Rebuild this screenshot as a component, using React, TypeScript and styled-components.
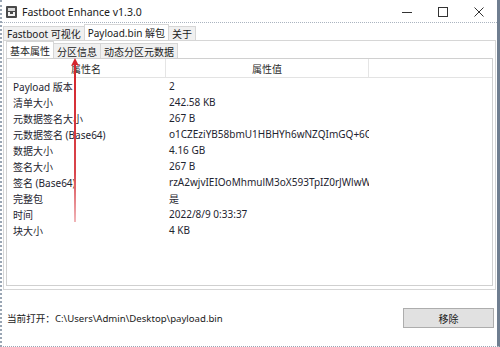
import styled, { createGlobalStyle } from "styled-components"

const GlobalStyle = createGlobalStyle`
    html, body {
        margin: 0;
        padding: 0;
        background: #ffffff;
    }
    body {
        font-family: "Noto Sans", "Noto Sans CJK SC", sans-serif;
        color: #1c1c1c;
    }
`

const rows = [
    { name: "Payload 版本", value: "2" },
    { name: "清单大小", value: "242.58 KB" },
    { name: "元数据签名大小", value: "267 B" },
    { name: "元数据签名 (Base64)", value: "o1CZEziYB58bmU1HBHYh6wNZQImGQ+6CdXr2kP0" },
    { name: "数据大小", value: "4.16 GB" },
    { name: "签名大小", value: "267 B" },
    { name: "签名 (Base64)", value: "rzA2wjvIEIOoMhmulM3oX593TpIZ0rJWlwWq8Hc" },
    { name: "完整包", value: "是" },
    { name: "时间", value: "2022/8/9 0:33:37" },
    { name: "块大小", value: "4 KB" },
]

export default function App() {
    return (
        <>
            <GlobalStyle />
            <Window>
                <TitleBar>
                    <AppIcon width="11" height="12" viewBox="0 0 11 12">
                        <rect x="0" y="0" width="11" height="12" rx="1" fill="#4a4a4a" />
                        <rect x="2" y="2" width="7" height="3" fill="#d8d8d8" />
                        <path d="M2 6 H4 V8 H7 V6 H9 V10 H2 Z" fill="#f2f2f2" />
                    </AppIcon>
                    <Title>Fastboot Enhance v1.3.0</Title>
                    <Controls>
                        <ControlButton>
                            <svg width="10" height="10" viewBox="0 0 10 10">
                                <path d="M0 5.5 H10" stroke="#333" strokeWidth="1" />
                            </svg>
                        </ControlButton>
                        <ControlButton>
                            <svg width="10" height="10" viewBox="0 0 10 10">
                                <rect x="0.5" y="0.5" width="9" height="9" fill="none" stroke="#333" strokeWidth="1" />
                            </svg>
                        </ControlButton>
                        <ControlButton>
                            <svg width="10" height="10" viewBox="0 0 10 10">
                                <path d="M0.5 0.5 L9.5 9.5 M9.5 0.5 L0.5 9.5" stroke="#333" strokeWidth="1" />
                            </svg>
                        </ControlButton>
                    </Controls>
                </TitleBar>

                <TabStrip>
                    <Tab>Fastboot 可视化</Tab>
                    <Tab $active>Payload.bin 解包</Tab>
                    <Tab>关于</Tab>
                </TabStrip>

                <Panel>
                    <InnerTabStrip>
                        <InnerTab $active>基本属性</InnerTab>
                        <InnerTab>分区信息</InnerTab>
                        <InnerTab>动态分区元数据</InnerTab>
                    </InnerTabStrip>

                    <ListView>
                        <HeaderRow>
                            <HeaderCell>属性名</HeaderCell>
                            <HeaderCell>属性值</HeaderCell>
                            <HeaderCell />
                        </HeaderRow>
                        {rows.map(row => (
                            <Row key={row.name}>
                                <NameCell>{row.name}</NameCell>
                                <ValueCell>{row.value}</ValueCell>
                            </Row>
                        ))}
                    </ListView>
                </Panel>

                <Footer>
                    <FilePath>当前打开：C:\Users\Admin\Desktop\payload.bin</FilePath>
                    <RemoveButton>移除</RemoveButton>
                </Footer>

                <Arrow width="12" height="164" viewBox="0 0 12 164">
                    <defs>
                        <linearGradient id="shaft" x1="0" y1="0" x2="0" y2="1">
                            <stop offset="0" stopColor="#d4232b" />
                            <stop offset="0.7" stopColor="#d9454c" />
                            <stop offset="1" stopColor="#f0b5b8" />
                        </linearGradient>
                    </defs>
                    <path d="M6 0 L10 8 L7 7 L7 164 L5 164 L5 7 L2 8 Z" fill="url(#shaft)" />
                </Arrow>
            </Window>
        </>
    )
}

const Window = styled.div`
    position: relative;
    width: 500px;
    height: 347px;
    box-sizing: border-box;
    display: flex;
    flex-direction: column;
    background: #ffffff;
    border-left: 2px dotted #9aa6b4;
    border-right: 3px solid #6f7e90;
    border-bottom: 1px dotted #9aa6b4;
    overflow: hidden;
`

const TitleBar = styled.div`
    height: 22px;
    flex-shrink: 0;
    display: flex;
    align-items: center;
    padding-left: 4px;
    border-bottom: 1px dotted #aab4c0;
`

const AppIcon = styled.svg`
    flex-shrink: 0;
    margin-top: 2px;
`

const Title = styled.span`
    margin-left: 5px;
    margin-top: 2px;
    font-size: 10.5px;
    color: #1a1a1a;
`

const Controls = styled.div`
    margin-left: auto;
    display: flex;
    align-items: center;
    margin-top: 2px;
`

const ControlButton = styled.div`
    width: 36px;
    height: 22px;
    display: flex;
    align-items: center;
    justify-content: center;
`

const TabStrip = styled.div`
    height: 17px;
    flex-shrink: 0;
    display: flex;
    align-items: flex-end;
    padding-left: 1px;
`

const Tab = styled.div<{ $active?: boolean }>`
    height: ${p => (p.$active ? "16px" : "14px")};
    box-sizing: border-box;
    display: flex;
    align-items: center;
    padding: 0 3px;
    font-size: 10px;
    color: #1a1a1a;
    white-space: nowrap;
    background: ${p => (p.$active ? "#ffffff" : "#f0f0f0")};
    border: 1px solid #d6d6d6;
    border-bottom: none;
    margin-right: -1px;
    position: relative;
    z-index: ${p => (p.$active ? 1 : 0)};
`

const Panel = styled.div`
    height: 250px;
    flex-shrink: 0;
    box-sizing: border-box;
    margin: 0 1px 0 1px;
    border: 1px solid #d6d6d6;
    display: flex;
    flex-direction: column;
    padding: 0 2px 3px 2px;
    background: #ffffff;
`

const InnerTabStrip = styled.div`
    height: 17px;
    flex-shrink: 0;
    display: flex;
    align-items: flex-end;
`

const InnerTab = styled.div<{ $active?: boolean }>`
    height: ${p => (p.$active ? "17px" : "15px")};
    box-sizing: border-box;
    display: flex;
    align-items: center;
    padding: 0 3px;
    font-size: 10px;
    color: #1a1a1a;
    white-space: nowrap;
    background: ${p => (p.$active ? "#ffffff" : "#f0f0f0")};
    border: 1px solid #d6d6d6;
    border-bottom: none;
    margin-right: -1px;
`

const ListView = styled.div`
    flex: 1;
    box-sizing: border-box;
    border: 1px solid #d0d0d0;
    background: #ffffff;
    overflow: hidden;
`

const HeaderRow = styled.div`
    display: grid;
    grid-template-columns: 159px 203px 1fr;
    height: 18px;
    border-bottom: 1px solid #e3e3e3;
`

const HeaderCell = styled.div`
    display: flex;
    align-items: center;
    justify-content: center;
    font-size: 10px;
    color: #2a2a2a;
    border-right: 1px solid #e5e5e5;
    &:last-child {
        border-right: none;
    }
`

const Row = styled.div`
    display: grid;
    grid-template-columns: 159px 203px 1fr;
    height: 16px;
    align-items: center;
    font-size: 10px;
    color: #1e2430;
`

const NameCell = styled.div`
    padding-left: 6px;
    white-space: nowrap;
    overflow: hidden;
`

const ValueCell = styled.div`
    padding-left: 3px;
    padding-right: 6px;
    white-space: nowrap;
    overflow: hidden;
`

const Footer = styled.div`
    flex: 1;
    display: flex;
    align-items: center;
    justify-content: space-between;
    padding: 0 3px 0 5px;
`

const FilePath = styled.span`
    font-size: 9.6px;
    color: #1a1a1a;
`

const RemoveButton = styled.button`
    width: 91px;
    height: 20px;
    box-sizing: border-box;
    background: #e1e1e1;
    border: 1px solid #adadad;
    font-family: "Noto Sans CJK SC", sans-serif;
    font-size: 10px;
    color: #1a1a1a;
    padding: 0;
`

const Arrow = styled.svg`
    position: absolute;
    left: 67px;
    top: 58px;
    pointer-events: none;
`
